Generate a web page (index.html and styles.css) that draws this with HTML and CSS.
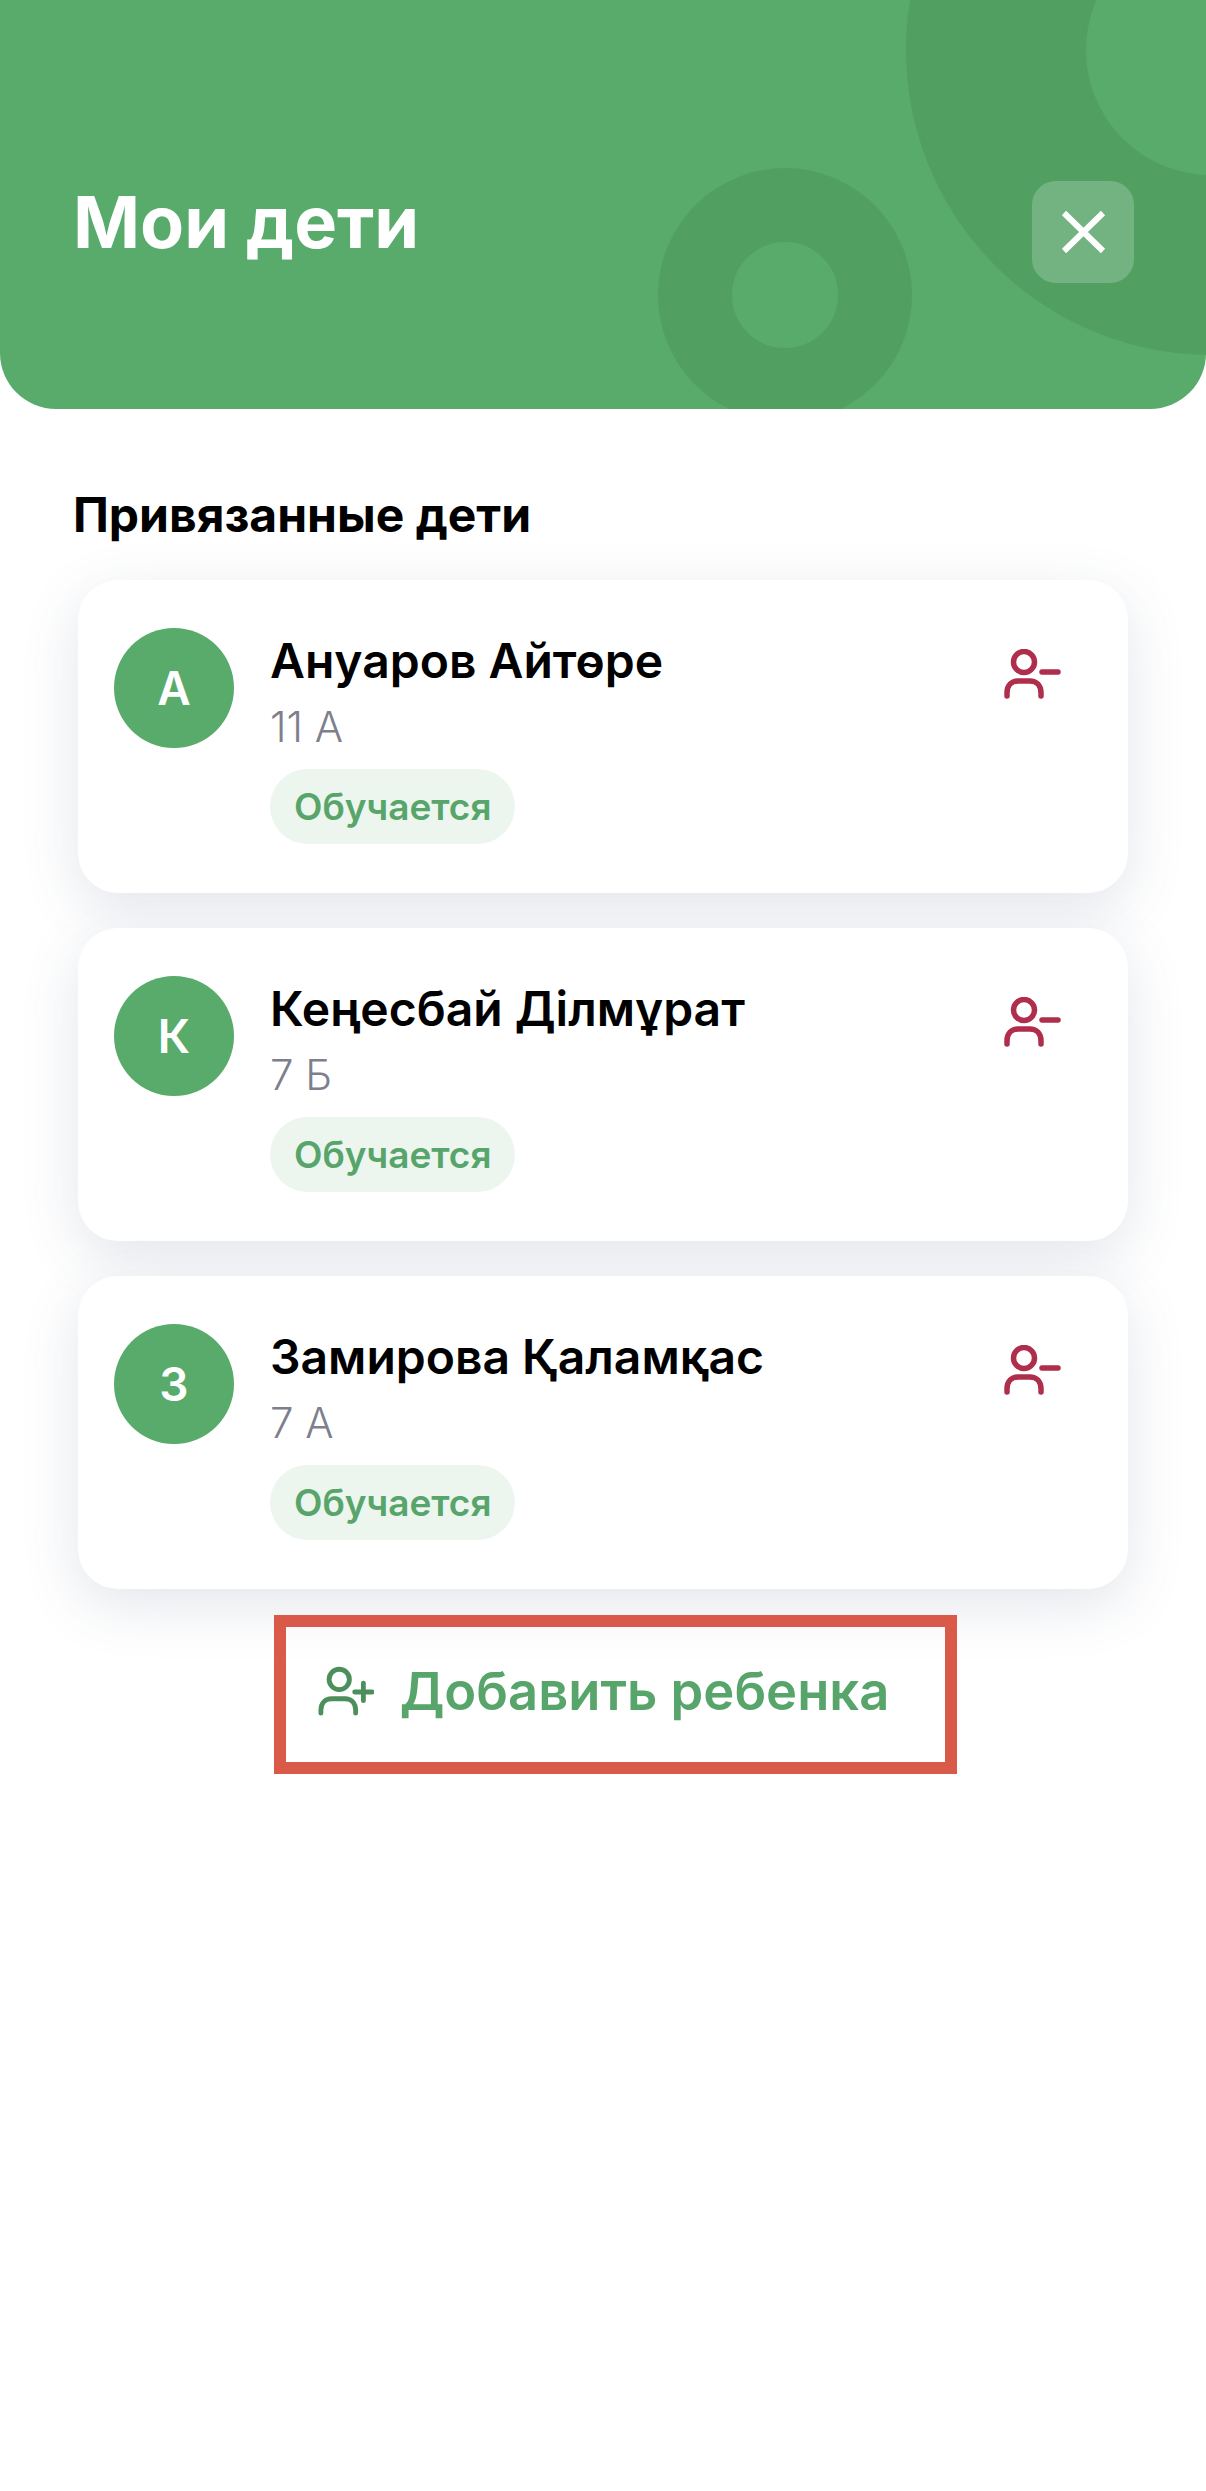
FILE: index.html
```html
<!DOCTYPE html>
<html>
  <head>
    <meta charset="utf-8">
    <title>Мои дети</title>
    <link rel="stylesheet" href="styles.css">
  </head>
  <body>
    <svg width="0" height="0" class="defs">
      <symbol id="user-minus" viewBox="0 0 60 54">
        <circle cx="20" cy="13" r="10.5" fill="none" stroke="currentColor" stroke-width="5.5" />
        <path d="M3 47V44C3 36 8 32 14 32H26C32 32 37 36 37 44V47" fill="none" stroke="currentColor" stroke-width="5.5" stroke-linecap="round" />
        <path d="M38 23H54" fill="none" stroke="currentColor" stroke-width="5.5" stroke-linecap="round" />
      </symbol>
    </svg>

    <header class="top">
      <svg class="top-bg" width="1206" height="409" viewBox="0 0 1206 409">
        <circle cx="1211" cy="50" r="215" fill="none" stroke="#51a062" stroke-width="180" />
        <circle cx="785" cy="295" r="90" fill="none" stroke="#51a062" stroke-width="74" />
      </svg>
      <h1 class="top-title">Мои дети</h1>
      <button class="close">
        <svg width="46" height="44" viewBox="0 0 46 44">
          <path d="M4 3L43 41M43 3L4 41" fill="none" stroke="#fff" stroke-width="6" />
        </svg>
      </button>
    </header>

    <main class="content">
      <h2 class="section-title">Привязанные дети</h2>

      <div class="card">
        <div class="avatar">А</div>
        <div class="info">
          <div class="name">Ануаров Айтөре</div>
          <div class="grade">11 А</div>
          <span class="status">Обучается</span>
        </div>
        <svg class="unlink" width="60" height="54"><use href="#user-minus" /></svg>
      </div>

      <div class="card">
        <div class="avatar">К</div>
        <div class="info">
          <div class="name">Кеңесбай Ділмұрат</div>
          <div class="grade">7 Б</div>
          <span class="status">Обучается</span>
        </div>
        <svg class="unlink" width="60" height="54"><use href="#user-minus" /></svg>
      </div>

      <div class="card">
        <div class="avatar">З</div>
        <div class="info">
          <div class="name">Замирова Қаламқас</div>
          <div class="grade">7 А</div>
          <span class="status">Обучается</span>
        </div>
        <svg class="unlink" width="60" height="54"><use href="#user-minus" /></svg>
      </div>

      <div class="add">
        <svg class="add-icon" width="56" height="52" viewBox="0 0 58 52">
          <circle cx="22" cy="14" r="10.5" fill="none" stroke="#4c8f5d" stroke-width="5" />
          <path d="M3 49V46C3 38 8 34 14 34H28C34 34 39 38 39 46V49" fill="none" stroke="#4c8f5d" stroke-width="5" stroke-linecap="round" />
          <path d="M38 27H56M47 18V36" fill="none" stroke="#4c8f5d" stroke-width="5" stroke-linecap="round" />
        </svg>
        <span>Добавить ребенка</span>
      </div>
    </main>
  </body>
</html>
```

FILE: styles.css
```css
body {
  margin: 0;
  min-height: 2491px;
  background: #fff;
  font-family: Inter, "Noto Sans", sans-serif;
  color: #000;
}
.defs {
  position: absolute;
}
.top {
  position: relative;
  height: 409px;
  box-sizing: border-box;
  padding: 181px 72px 0 73px;
  display: flex;
  justify-content: space-between;
  align-items: flex-start;
  background: #58ab6b;
  border-radius: 0 0 56px 56px;
  overflow: hidden;
}
.top-bg {
  position: absolute;
  left: 0;
  top: 0;
}
.top-title {
  position: relative;
  margin: -3px 0 0;
  font-size: 72px;
  line-height: 88px;
  font-weight: 700;
  color: #fff;
}
.close {
  position: relative;
  width: 102px;
  height: 102px;
  padding: 0;
  border: 0;
  border-radius: 24px;
  background: rgba(255, 255, 255, 0.2);
  display: flex;
  align-items: center;
  justify-content: center;
}
.content {
  padding: 78px 78px 0;
}
.section-title {
  margin: 0 0 37px -5px;
  font-size: 48px;
  line-height: 56px;
  font-weight: 700;
}
.card {
  height: 313px;
  box-sizing: border-box;
  padding: 48px 64px 0 36px;
  display: flex;
  align-items: flex-start;
  background: #fff;
  border-radius: 40px;
  box-shadow: 0 16px 56px rgba(70, 90, 120, 0.15);
}
.card + .card {
  margin-top: 35px;
}
.avatar {
  width: 120px;
  height: 120px;
  flex: none;
  border-radius: 50%;
  background: #58ab6b;
  color: #fff;
  font-size: 46px;
  font-weight: 600;
  display: flex;
  align-items: center;
  justify-content: center;
}
.info {
  flex: 1;
  margin-left: 36px;
}
.name {
  margin-top: 5px;
  font-size: 48px;
  line-height: 56px;
  font-weight: 600;
}
.grade {
  margin-top: 13px;
  font-size: 42px;
  line-height: 50px;
  font-weight: 300;
  color: #7d808c;
}
.status {
  display: inline-block;
  margin-top: 17px;
  padding: 0 24px;
  height: 75px;
  line-height: 75px;
  border-radius: 38px;
  background: #ecf6ee;
  color: #58a56c;
  font-size: 37px;
  font-weight: 600;
}
.unlink {
  flex: none;
  margin-top: 21px;
  color: #ae2e4c;
}
.add {
  box-sizing: border-box;
  display: flex;
  align-items: center;
  justify-content: center;
  gap: 26px;
  width: 683px;
  height: 159px;
  margin: 26px 0 0 196px;
  padding: 0 24px 8px 0;
  border: 12px solid #d95a49;
  font-size: 52.5px;
  font-weight: 600;
  color: #58a56c;
}
```
